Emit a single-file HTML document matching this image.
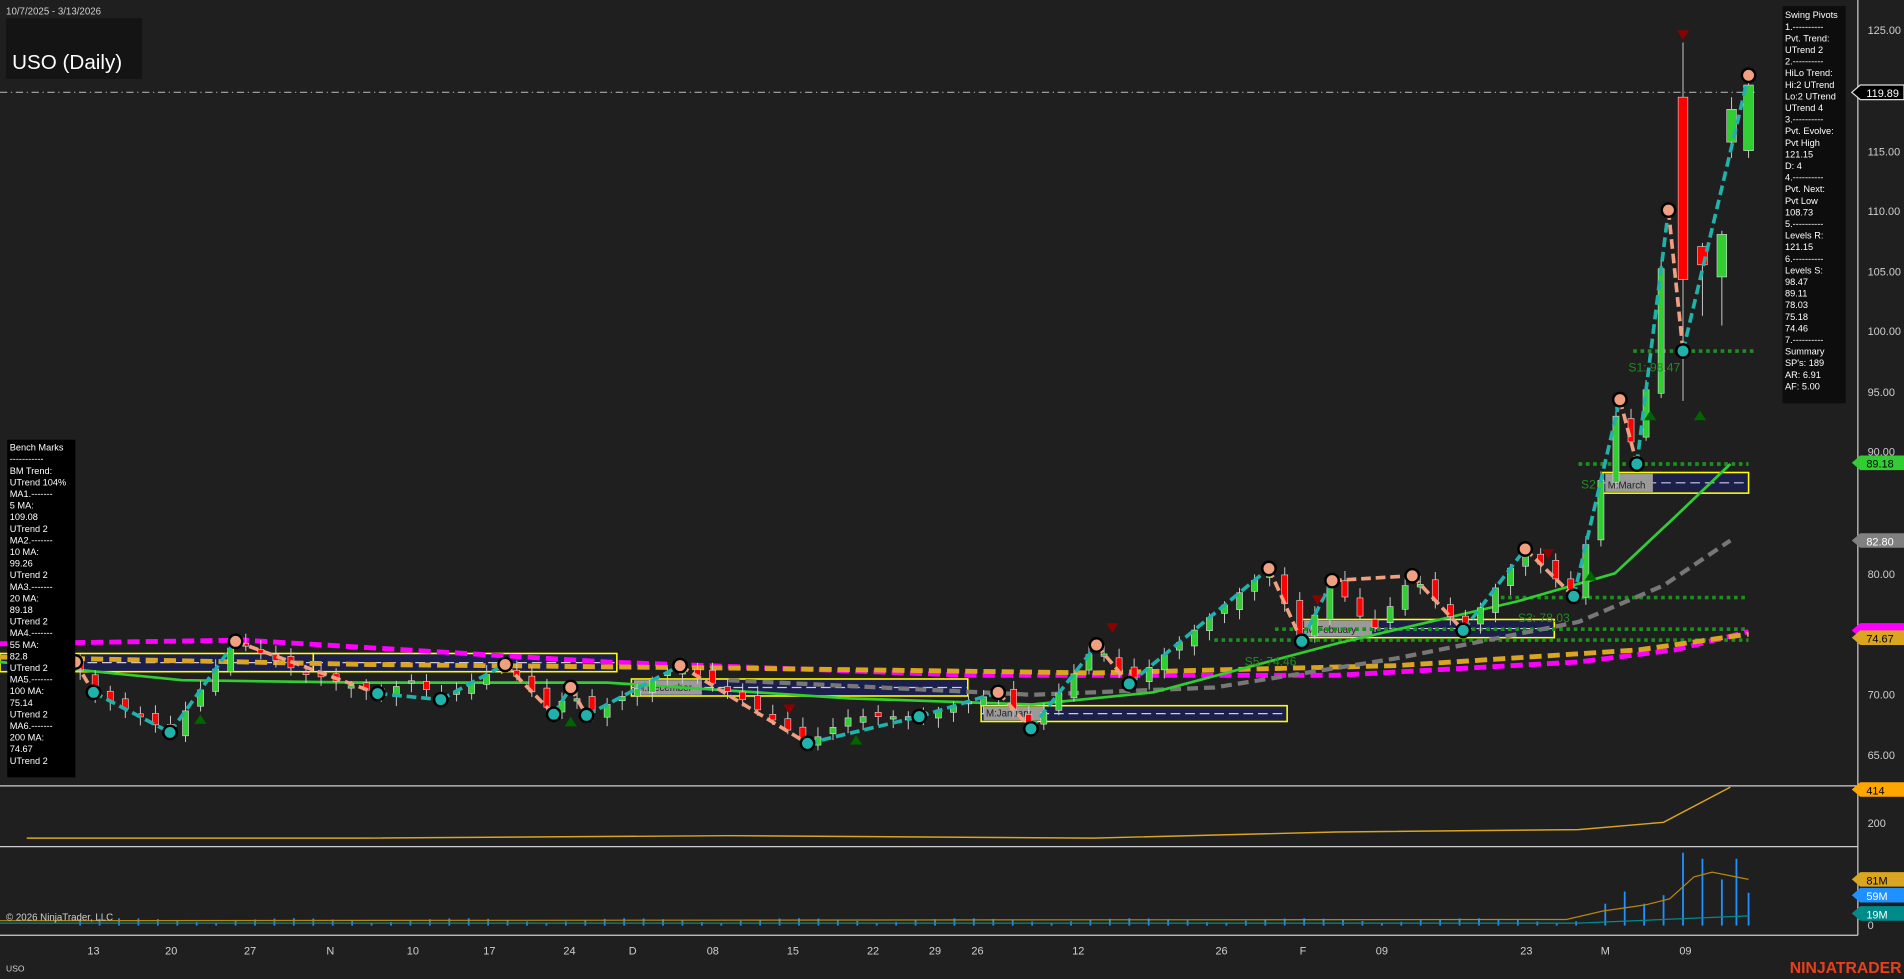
<!DOCTYPE html>
<html><head><meta charset="utf-8"><style>
html,body{margin:0;padding:0;background:#1f1f1f;overflow:hidden}
svg{display:block}
text{font-family:"Liberation Sans",Arial,sans-serif}
</style></head><body>
<svg id="s" width="1904" height="979" viewBox="0 0 1568 806" preserveAspectRatio="none" xmlns="http://www.w3.org/2000/svg">
<rect width="1568" height="806" fill="#1f1f1f"/>
<g id="chart"></g>
<line x1="1530" y1="0" x2="1530" y2="770" stroke="#cfcfcf" stroke-width="1"/>
<line x1="0" y1="647" x2="1530" y2="647" stroke="#cfcfcf" stroke-width="1"/>
<line x1="0" y1="697" x2="1530" y2="697" stroke="#cfcfcf" stroke-width="1"/>
<line x1="0" y1="770" x2="1530" y2="770" stroke="#cfcfcf" stroke-width="1"/>
<g fill="#cfcfcf" font-size="9">
<text x="1538" y="28">125.00</text><text x="1538" y="128">115.00</text><text x="1538" y="177">110.00</text><text x="1538" y="227">105.00</text><text x="1538" y="276">100.00</text><text x="1538" y="326">95.00</text><text x="1538" y="375">90.00</text><text x="1538" y="476">80.00</text><text x="1538" y="575">70.00</text><text x="1538" y="625">65.00</text>
<text x="1538" y="681">200</text><text x="1538" y="765">0</text>
</g>
<g font-size="9">
<path d="M1525,76 l7,-6 h36 v12 h-36z" fill="#000" stroke="#ddd"/><text x="1537" y="80" fill="#fff">119.89</text>
<path d="M1525,381 l7,-6 h36 v12 h-36z" fill="#32cd32"/><text x="1537" y="385" fill="#000">89.18</text>
<path d="M1525,445 l7,-6 h36 v12 h-36z" fill="#808080"/><text x="1537" y="449" fill="#fff">82.80</text>
<path d="M1525,519 l7,-6 h36 v12 h-36z" fill="#ff00ff"/>
<path d="M1525,525 l7,-6 h36 v12 h-36z" fill="#daa520"/><text x="1537" y="529" fill="#000">74.67</text>
<path d="M1525,650 l7,-6 h36 v12 h-36z" fill="#ffa500"/><text x="1537" y="654" fill="#000">414</text>
<path d="M1525,724 l7,-6 h36 v12 h-36z" fill="#daa520"/><text x="1537" y="728" fill="#000">81M</text>
<path d="M1525,737 l7,-6 h36 v12 h-36z" fill="#1e90ff"/><text x="1537" y="741" fill="#fff">59M</text>
<path d="M1525,752 l7,-6 h36 v12 h-36z" fill="#008b8b"/><text x="1537" y="756" fill="#fff">19M</text>
</g>
<g fill="#cfcfcf" font-size="9" text-anchor="middle">
<text x="77" y="786">13</text><text x="141" y="786">20</text><text x="206" y="786">27</text><text x="272" y="786">N</text><text x="340" y="786">10</text><text x="403" y="786">17</text><text x="469" y="786">24</text><text x="521" y="786">D</text><text x="587" y="786">08</text><text x="653" y="786">15</text><text x="719" y="786">22</text><text x="770" y="786">29</text><text x="805" y="786">26</text><text x="888" y="786">12</text><text x="1006" y="786">26</text><text x="1073" y="786">F</text><text x="1138" y="786">09</text><text x="1257" y="786">23</text><text x="1322" y="786">M</text><text x="1388" y="786">09</text>
</g>
<text x="5" y="758" fill="#cfcfcf" font-size="8">© 2026 NinjaTrader, LLC</text>
<text x="5" y="800" fill="#cfcfcf" font-size="7">USO</text>
<text x="1566" y="801" fill="#e8401c" font-size="13" font-weight="bold" text-anchor="end">NINJATRADER</text>
<text x="5" y="12" fill="#cfcfcf" font-size="8">10/7/2025 - 3/13/2026</text>
<rect x="5" y="15" width="112" height="50" fill="#141414"/>
<text x="10" y="57" fill="#fff" font-size="17">USO (Daily)</text>
<rect x="1468" y="5" width="52" height="327" fill="#0d0d0d"/>
<g id="sp" fill="#fff" font-size="7.6"></g>
<rect x="6" y="362" width="56" height="278" fill="#000"/>
<g id="bm" fill="#fff" font-size="7.6"></g>
</svg>
<script>
(function(){
var NS="http://www.w3.org/2000/svg",C=document.getElementById('chart');
function el(t,a,p){var e=document.createElementNS(NS,t);for(var k in a)e.setAttribute(k,a[k]);(p||C).appendChild(e);return e;}
function txt(g,x,y,lines,lh){lines.forEach(function(s,i){var t=el('text',{x:x,y:y+i*lh},g);t.textContent=s;});}
txt(document.getElementById('sp'),1470,15,["Swing Pivots","1.----------","Pvt. Trend:","UTrend 2","2.----------","HiLo Trend:","Hi:2 UTrend","Lo:2 UTrend","UTrend 4","3.----------","Pvt. Evolve:","Pvt High","121.15","D: 4","4.----------","Pvt. Next:","Pvt Low","108.73","5.----------","Levels R:","121.15","6.----------","Levels S:","98.47","89.11","78.03","75.18","74.46","7.----------","Summary","SP's: 189","AR: 6.91","AF: 5.00"],9.55);
txt(document.getElementById('bm'),8,371,["Bench Marks","-----------","BM Trend:","UTrend 104%","MA1.-------","5 MA:","109.08","UTrend 2","MA2.-------","10 MA:","99.26","UTrend 2","MA3.-------","20 MA:","89.18","UTrend 2","MA4.-------","55 MA:","82.8","UTrend 2","MA5.-------","100 MA:","75.14","UTrend 2","MA6.-------","200 MA:","74.67","UTrend 2"],9.55);
el('line',{x1:0,y1:76,x2:1445,y2:76,stroke:'#aaa','stroke-dasharray':'6,3,1,3'});
[[0,538,258,15,'M:November',272],[258,538,250,15,null],[520,559,277,14,'M:December',522],[808,581,252,13,'M:January',810],[1072,510,208,15,'M:February',1074],[1320,389,120,17,'M:March',1322]].forEach(function(b){
el('rect',{x:b[0],y:b[1],width:b[2],height:b[3],fill:'#1b1f4a',stroke:'#ffff00','stroke-width':1.3});
el('line',{x1:b[0],y1:b[1]+b[3]/2,x2:b[0]+b[2],y2:b[1]+b[3]/2,stroke:'#ccd','stroke-dasharray':'8,4'});
if(b[4]){el('rect',{x:b[5],y:b[1]+1,width:b[4].length*5.6,height:b[3]-2,fill:'#9a9a9a'});var t=el('text',{x:b[5]+2,y:b[1]+b[3]-4,fill:'#222','font-size':8});t.textContent=b[4];}
});
[[1300,382,1440],[1230,492,1440],[1050,518,1440],[1000,527,1440],[1345,289,1447]].forEach(function(l){el('line',{x1:l[0],y1:l[1],x2:l[2],y2:l[1],stroke:'#1e8f1e','stroke-width':3,'stroke-dasharray':'3,3'});});
function pl(pts,a){a.points=pts.map(function(p){return p.join(',')}).join(' ');a.fill='none';return el('polyline',a);}
pl([[0,530],[200,527],[500,545],[800,556],[1100,556],[1300,545],[1380,535],[1440,520]],{stroke:'#ff00ff','stroke-width':4,'stroke-dasharray':'10,5'});
pl([[0,541],[300,547],[600,550],[900,554],[1150,548],[1350,535],[1440,522]],{stroke:'#daa520','stroke-width':4,'stroke-dasharray':'10,5'});
pl([[600,560],[850,572],[1000,566],[1150,542],[1300,512],[1370,482],[1425,445]],{stroke:'#777','stroke-width':3.5,'stroke-dasharray':'9,5'});
pl([[0,545],[150,560],[300,562],[500,562],[700,575],[850,580],[950,570],[1100,530],[1250,495],[1330,472],[1380,425],[1425,382]],{stroke:'#32cd32','stroke-width':2.2});
var P=[[62,545],[77,570],[140,603],[194,528],[240,550],[311,571],[340,560],[363,576],[416,547],[456,588],[470,566],[483,589],[560,548],[610,575],[665,612],[700,590],[757,590],[822,570],[849,600],[903,531],[930,563],[1045,468],[1072,528],[1097,478],[1130,520],[1163,474],[1205,519],[1256,452],[1296,491],[1334,329],[1348,382],[1374,173]];
function py(x){for(var i=0;i<P.length-1;i++){if(x>=P[i][0]&&x<=P[i+1][0]){var f=(x-P[i][0])/(P[i+1][0]-P[i][0]);return P[i][1]+f*(P[i+1][1]-P[i][1]);}}return 550;}
var prev=py(62);
for(var x=66;x<1370;x+=12.4){var c=py(x),o=prev+(Math.sin(x*1.7)*4);var up=c<o;var tp=Math.min(o,c),bt=Math.max(o,c);if(bt-tp<2)bt=tp+2;
el('line',{x1:x,y1:tp-3-Math.abs(Math.sin(x))*5,x2:x,y2:bt+3+Math.abs(Math.cos(x))*5,stroke:'#ccc','stroke-width':0.8});
el('rect',{x:x-2.5,y:tp,width:5,height:bt-tp,fill:up?'#32cd32':'#ff0000',stroke:'#ddd','stroke-width':0.5});prev=c;}
[[1386,80,230,35,330,'#f00'],[1402,203,218,200,260,'#f00'],[1418,193,228,190,268,'#32cd32'],[1426,90,117,80,130,'#32cd32'],[1440,70,124,65,130,'#32cd32']].forEach(function(k){
el('line',{x1:k[0],y1:k[3],x2:k[0],y2:k[4],stroke:'#ccc','stroke-width':0.8});el('rect',{x:k[0]-4,y:k[1],width:8,height:k[2]-k[1],fill:k[5],stroke:'#ddd','stroke-width':0.5});});
var lows=[[77,570],[140,603],[311,571],[363,576],[456,588],[483,589],[665,612],[757,590],[849,600],[930,563],[1072,528],[1205,519],[1296,491],[1348,382],[1386,289]];
var highs=[[62,545],[194,528],[416,547],[470,566],[560,548],[822,570],[903,531],[1045,468],[1097,478],[1163,474],[1256,452],[1334,329],[1374,173],[1440,62]];
var all=lows.map(function(p){return p.concat(0)}).concat(highs.map(function(p){return p.concat(1)})).sort(function(a,b){return a[0]-b[0]});
for(var i=0;i<all.length-1;i++){var a=all[i],b=all[i+1];el('line',{x1:a[0],y1:a[1],x2:b[0],y2:b[1],stroke:a[2]?'#f0a080':'#20b2aa','stroke-width':3,'stroke-dasharray':'8,4'});}
all.forEach(function(p){el('circle',{cx:p[0],cy:p[1],r:5.5,fill:p[2]?'#f0a080':'#20b2aa',stroke:'#000','stroke-width':2});});
[[1386,25],[916,513],[1085,490],[1275,452],[650,580]].forEach(function(t){el('path',{d:'M'+(t[0]-5)+','+t[1]+'h10l-5,8z',fill:'#8b0000'});});
[[1359,338],[1400,338],[165,588],[470,590],[705,605],[1310,470]].forEach(function(t){el('path',{d:'M'+(t[0]-5)+','+(t[1]+8)+'h10l-5,-8z',fill:'#006400'});});
var t=el('text',{x:1341,y:306,fill:'#228b22','font-size':10});t.textContent='S1: 98.47';
t=el('text',{x:1302,y:402,fill:'#228b22','font-size':10});t.textContent='S2';
t=el('text',{x:1025,y:548,fill:'#228b22','font-size':10});t.textContent='S5: 74.46';
t=el('text',{x:1250,y:512,fill:'#228b22','font-size':10});t.textContent='S3: 78.03';
pl([[22,690],[300,690],[600,688],[900,690],[1100,685],[1300,683],[1370,677],[1425,648]],{stroke:'#daa520','stroke-width':1.2});
for(var x2=66;x2<1300;x2+=16){var h=2+Math.abs(Math.sin(x2*0.37))*4;el('line',{x1:x2,y1:762,x2:x2,y2:762-h,stroke:'#1e90ff','stroke-width':1.5});}
[[1322,18],[1338,28],[1354,18],[1370,25],[1386,60],[1402,55],[1418,38],[1430,55],[1440,27]].forEach(function(v){el('line',{x1:v[0],y1:762,x2:v[0],y2:762-v[1],stroke:'#1e90ff','stroke-width':1.5});});
pl([[0,758],[1290,757],[1320,750],[1355,745],[1375,740],[1395,722],[1410,718],[1440,724]],{stroke:'#b8860b','stroke-width':1});
pl([[0,760],[1300,760],[1440,754]],{stroke:'#008b8b','stroke-width':1});
})();
</script>
</body></html>
